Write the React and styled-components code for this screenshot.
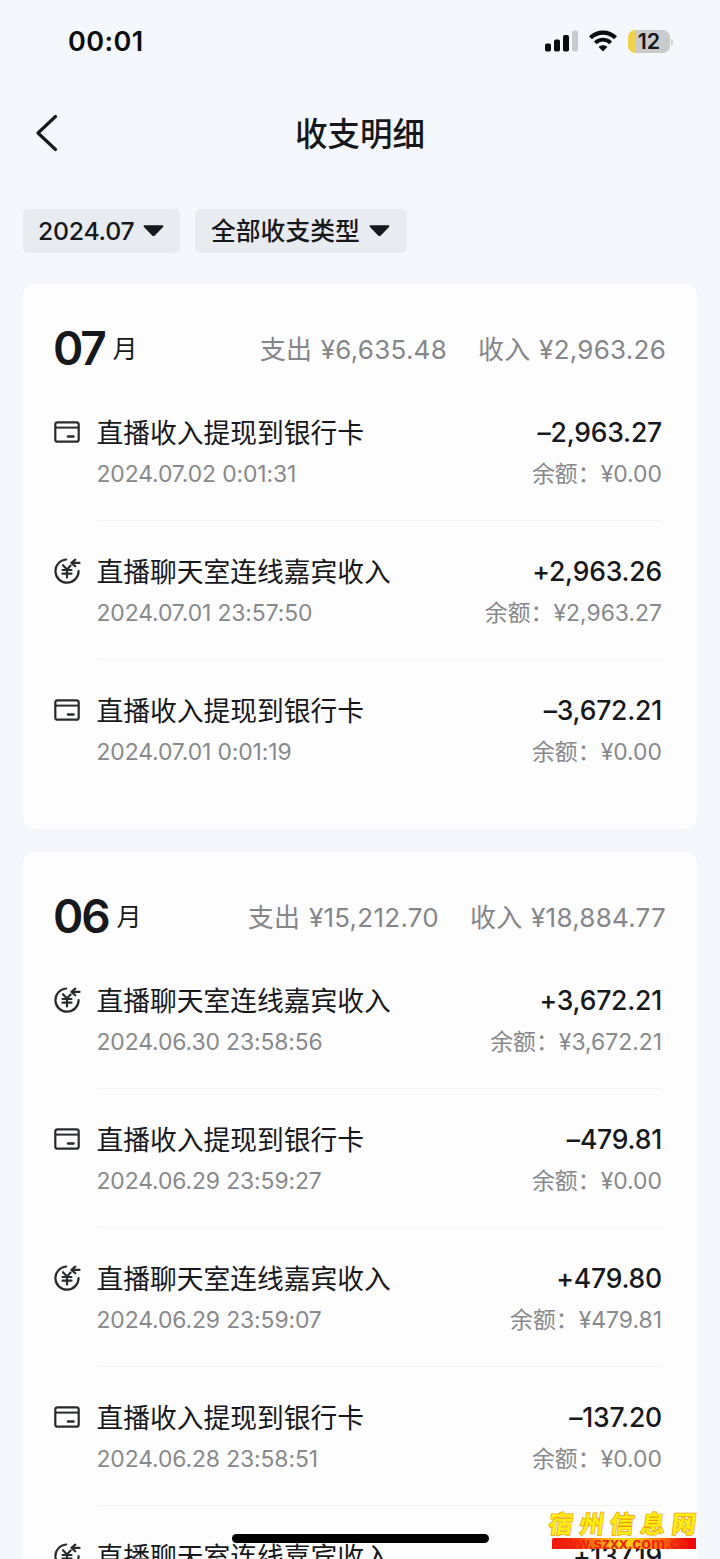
import React from 'react';
import styled, { createGlobalStyle } from 'styled-components';

const Global = createGlobalStyle`
  * { box-sizing: border-box; }
  body {
    margin: 0;
    background: #f4f8fc;
    color: #17181c;
    font-family: Inter, "Noto Sans CJK SC", sans-serif;
  }
`;

const Page = styled.div`
  position: relative;
  width: 720px;
  height: 1559px;
  overflow: hidden;
  background: #f4f8fc;
`;

const StatusBar = styled.header`
  display: flex;
  align-items: center;
  justify-content: space-between;
  height: 82px;
  padding: 0 50px 0 68px;
`;

const Clock = styled.span`
  font-size: 27px;
  font-weight: 600;
  letter-spacing: 0.4px;
  color: #0b0c0e;
`;

const StatusIcons = styled.div`
  display: flex;
  align-items: center;
  gap: 11px;
`;

const Battery = styled.div`
  position: relative;
  width: 42px;
  height: 23px;
  border-radius: 7px;
  background: linear-gradient(90deg, #f0d348 0 7px, #c9cbcd 7px);
  font-size: 21.5px;
  font-weight: 600;
  line-height: 23px;
  text-align: center;
  color: #15171a;
  &::after {
    content: '';
    position: absolute;
    left: 43px;
    top: 9px;
    width: 2px;
    height: 6px;
    border-radius: 0 2px 2px 0;
    background: #cdd0d3;
  }
`;

const NavBar = styled.nav`
  display: grid;
  grid-template-columns: 60px 1fr 60px;
  align-items: center;
  height: 102px;
  padding: 0 18px;
`;

const BackButton = styled.button`
  display: flex;
  padding: 0 0 0 17px;
  border: 0;
  background: none;
  color: #17181c;
`;

const Title = styled.h1`
  margin: 0;
  padding-top: 3px;
  font-size: 32.5px;
  font-weight: 500;
  line-height: 48px;
  text-align: center;
`;

const Filters = styled.div`
  display: flex;
  gap: 15px;
  padding: 25px 23px 0;
  height: 100px;
`;

const FilterButton = styled.button`
  display: flex;
  align-items: center;
  gap: 9px;
  width: ${(p) => p.$width}px;
  height: 44px;
  padding: 0 0 0 ${(p) => p.$left}px;
  border: 0;
  border-radius: 5px;
  background: #e8ebef;
  color: #17181c;
  font-family: inherit;
  font-size: 24.8px;
  font-weight: ${(p) => p.$weight};
  line-height: 40px;
  letter-spacing: ${(p) => p.$spacing || 0}px;
  white-space: nowrap;
`;

const FilterLabel = styled.span`
  margin-bottom: ${(p) => p.$lift || 0}px;
`;

const Card = styled.section`
  margin: 0 23px 23px;
  padding-bottom: ${(p) => p.$bottom || 0}px;
  border-radius: 12px;
  background: #fdfdfe;
`;

const CardHeader = styled.div`
  display: flex;
  align-items: center;
  height: 98px;
  padding: 30px 31px 0 30px;
`;

const MonthNumber = styled.span`
  font-size: 46px;
  font-weight: 600;
  line-height: 60px;
  letter-spacing: -2.2px;
`;

const MonthUnit = styled.span`
  margin-left: 8px;
  padding-top: 2px;
  font-size: 25px;
  line-height: 60px;
`;

const Totals = styled.div`
  display: flex;
  gap: 31px;
  margin-left: auto;
  padding-top: 3px;
  color: #85868a;
`;

const Total = styled.span`
  font-size: 26px;
  font-weight: 400;
  line-height: 60px;
  letter-spacing: 0.25px;
  word-spacing: 1px;
  white-space: pre;
`;

const Row = styled.div`
  display: grid;
  grid-template-columns: 42.5px 1fr;
  height: 139px;
  padding: 30px 35px 0 31px;
`;

const RowIcon = styled.div`
  display: flex;
  align-items: center;
  height: 40px;
  color: #292a2e;
`;

const RowBody = styled.div`
  display: flex;
  flex-direction: column;
  border-bottom: 1px solid ${(p) => (p.$last ? 'transparent' : '#f3f4f5')};
`;

const Line = styled.div`
  display: flex;
  align-items: center;
  justify-content: space-between;
  height: ${(p) => p.$height}px;
  line-height: ${(p) => p.$height}px;
  white-space: nowrap;
`;

const RowTitle = styled.span`
  padding-top: 2px;
  font-size: 26.75px;
`;

const Amount = styled.span`
  font-size: 26.5px;
  font-weight: 500;
  letter-spacing: -0.2px;
`;

const Meta = styled.span`
  padding-top: 2px;
  font-size: 22.9px;
  letter-spacing: ${(p) => p.$spacing || 0}px;
  color: #88898c;
`;

const HomeIndicator = styled.div`
  position: absolute;
  left: 232px;
  top: 1534px;
  width: 257px;
  height: 9px;
  border-radius: 5px;
  background: #000;
`;

const Watermark = styled.div`
  position: absolute;
  left: 549px;
  top: 1508px;
  width: 147px;
`;

const WatermarkName = styled.div`
  display: flex;
  justify-content: space-between;
  height: 30px;
  font-family: "Noto Sans CJK SC", sans-serif;
  font-size: 24.5px;
  font-weight: 700;
  line-height: 29px;
  color: #ffee10;
  -webkit-text-stroke: 1.4px #ee9a10;
  paint-order: stroke fill;
`;

const WatermarkChar = styled.span`
  transform: skewX(-7deg);
`;

const WatermarkUrl = styled.div`
  display: flex;
  align-items: center;
  height: 11px;
  margin-left: 3px;
  border-radius: 2px 0 0 0;
  overflow: hidden;
  background: linear-gradient(90deg, #ee0a08 0%, #f8300c 16%, #ffc80c 42%, #ffd010 54%, #fa7a0c 74%, #ee0a08 94%);
  font-family: "Liberation Sans", sans-serif;
  font-size: 16px;
  font-weight: 700;
  line-height: 11px;
  color: #f02010;
  white-space: nowrap;
`;

const Caret = () => (
  <svg width="21" height="12" viewBox="0 0 22 12" fill="currentColor">
    <path d="M1.600 0h18.800c1 0 1.300 1 .6 1.700l-8.600 8.900c-.8.8-2 .8-2.800 0L1 1.700C.3 1 .6 0 1.600 0Z" />
  </svg>
);

const Signal = () => (
  <svg width="33" height="22" viewBox="0 0 33 22" fill="#0b0c0e">
    <rect x="0" y="13.500" width="6" height="8" rx="1.700" />
    <rect x="9" y="9.500" width="6" height="12" rx="1.700" />
    <rect x="18" y="5" width="6" height="16.500" rx="1.700" />
    <rect x="27" y="0.500" width="6" height="21" rx="1.700" fill="#c9cccf" />
  </svg>
);

const Wifi = () => (
  <svg width="28" height="22" viewBox="0 0 28 22" fill="none" stroke="#0b0c0e">
    <path d="M1.500 7.800C8.500 0.800 19.500 0.800 26.500 7.800" strokeWidth="4.200" />
    <path d="M6.300 12.800C10.700 8.500 17.300 8.500 21.700 12.800" strokeWidth="3.800" />
    <path d="M14 21.500 9.600 17c2.500-2.300 6.300-2.300 8.800 0Z" fill="#0b0c0e" stroke="none" />
  </svg>
);

const CardIcon = () => (
  <svg width="26" height="22" viewBox="0 0 26 22" fill="none" stroke="currentColor" strokeWidth="2.200">
    <rect x="1.300" y="1.300" width="23.400" height="19.400" rx="2.300" />
    <path d="M1.500 6.600h23" strokeWidth="2" />
    <path d="M14 15.500h5.500" strokeWidth="2.400" strokeLinecap="round" />
  </svg>
);

const IncomeIcon = () => (
  <svg width="27" height="28" viewBox="0 0 27 28" fill="none" stroke="currentColor" strokeWidth="2.200" strokeLinecap="round" strokeLinejoin="round">
    <path d="M12.200 2.500A11.600 11.600 0 1 0 24.600 14" />
    <path d="M9 8.200 13 12.400l3.600-3.800M13 12.400v8.200M8.500 13h9M8.500 16.700h9" strokeWidth="2.200" />
    <path d="M25.500 5.900H18" strokeWidth="2.200" />
    <path d="M21.300 2.600 17.500 5.900l3.800 3.400" strokeWidth="2.200" />
  </svg>
);

const WITHDRAW = '直播收入提现到银行卡';
const GUEST = '直播聊天室连线嘉宾收入';

const months = [
  {
    month: '07', out: '¥6,635.48', income: '¥2,963.26', bottom: 30,
    rows: [
      [WITHDRAW, '–2,963.27', '2024.07.02 0:01:31', '¥0.00'],
      [GUEST, '+2,963.26', '2024.07.01 23:57:50', '¥2,963.27'],
      [WITHDRAW, '–3,672.21', '2024.07.01 0:01:19', '¥0.00'],
    ],
  },
  {
    month: '06', out: '¥15,212.70', income: '¥18,884.77',
    rows: [
      [GUEST, '+3,672.21', '2024.06.30 23:58:56', '¥3,672.21'],
      [WITHDRAW, '–479.81', '2024.06.29 23:59:27', '¥0.00'],
      [GUEST, '+479.80', '2024.06.29 23:59:07', '¥479.81'],
      [WITHDRAW, '–137.20', '2024.06.28 23:58:51', '¥0.00'],
      [GUEST, '+137.19', '', ''],
    ],
  },
];

export default function App() {
  return (
    <Page>
      <Global />
      <StatusBar>
        <Clock>00:01</Clock>
        <StatusIcons>
          <Signal />
          <Wifi />
          <Battery>12</Battery>
        </StatusIcons>
      </StatusBar>
      <NavBar>
        <BackButton aria-label="返回">
          <svg width="24" height="38" viewBox="0 0 24 38" fill="none" stroke="currentColor" strokeWidth="3.200" strokeLinecap="round" strokeLinejoin="round">
            <path d="M20.500 2.500 3 19l17.500 16.500" />
          </svg>
        </BackButton>
        <Title>收支明细</Title>
      </NavBar>
      <Filters>
        <FilterButton $width={157} $left={15} $weight={450} $spacing={-0.25}>
          <FilterLabel>2024.07</FilterLabel><Caret />
        </FilterButton>
        <FilterButton $width={212} $left={16} $weight={500}>
          <FilterLabel>全部收支类型</FilterLabel><Caret />
        </FilterButton>
      </Filters>
      {months.map((m) => (
        <Card key={m.month} $bottom={m.bottom}>
          <CardHeader>
            <MonthNumber>{m.month}</MonthNumber>
            <MonthUnit>月</MonthUnit>
            <Totals>
              <Total>支出 {m.out}</Total>
              <Total>收入 {m.income}</Total>
            </Totals>
          </CardHeader>
          {m.rows.map(([title, amount, date, balance], i) => (
            <Row key={i}>
              <RowIcon>{title === WITHDRAW ? <CardIcon /> : <IncomeIcon />}</RowIcon>
              <RowBody $last={i === m.rows.length - 1}>
                <Line $height={40}>
                  <RowTitle>{title}</RowTitle>
                  <Amount>{amount}</Amount>
                </Line>
                {date && (
                  <Line $height={43}>
                    <Meta $spacing={-0.12}>{date}</Meta>
                    <Meta>余额：{balance}</Meta>
                  </Line>
                )}
              </RowBody>
            </Row>
          ))}
        </Card>
      ))}
      <HomeIndicator />
      <Watermark>
        <WatermarkName>
          {[...'宿州信息网'].map((c) => <WatermarkChar key={c}>{c}</WatermarkChar>)}
        </WatermarkName>
        <WatermarkUrl>www.szxx.com.cn</WatermarkUrl>
      </Watermark>
    </Page>
  );
}
